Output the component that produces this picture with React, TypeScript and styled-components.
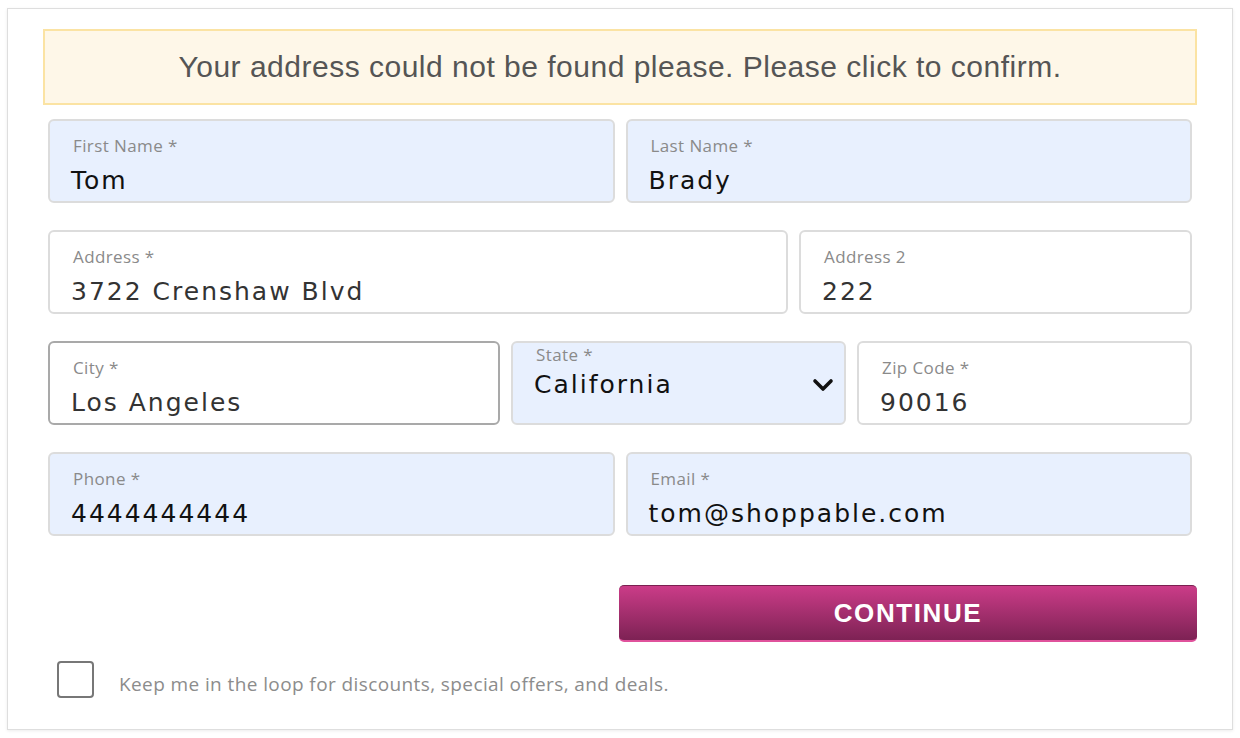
import styled, { createGlobalStyle } from "styled-components";

const GlobalStyle = createGlobalStyle`
    html, body { margin: 0; padding: 0; background: #ffffff; }
    * { box-sizing: border-box; }
`

const Card = styled.div`
    margin: 8px 7px;
    width: 1226px; height: 722px;
    padding: 20px 40px 0;
    border: 1px solid #dedede;
    box-shadow: 0 1px 3px rgba(0,0,0,0.08);
    background: #fff;
`
const Notice = styled.div`
    margin: 0 -5px 14px;
    height: 76px;
    display: flex; align-items: center; justify-content: center;
    background: #fef7e8;
    border: 2px solid #fbe3a3;
    font-family: "Liberation Sans", Arial, sans-serif;
    font-size: 30px; letter-spacing: 0.5px; color: #555;
`
const Rows = styled.div`
    display: flex; flex-direction: column; row-gap: 27px;
`
const Row = styled.div<{ $cols: string }>`
    display: grid; grid-template-columns: ${p => p.$cols}; column-gap: 11px;
`
const Field = styled.div<{ $filled?: boolean; $focus?: boolean }>`
    height: 84px;
    padding: 13px 23px 0;
    border-radius: 6px;
    border: 2px solid ${p => p.$focus ? "#a9a9a9" : "#dcdcdc"};
    background: ${p => p.$filled ? "#e8f0fe" : "#ffffff"};
    display: flex; flex-direction: column; row-gap: 9px;
`
const Label = styled.div`
    font-family: "Open Sans", Lato, sans-serif;
    font-size: 17px; letter-spacing: 0.4px; color: #8a8a8a;
`
const Value = styled.div<{ $dark?: boolean }>`
    margin-left: -2px;
    font-family: "DejaVu Sans", sans-serif;
    font-size: 25px; letter-spacing: 2px;
    color: ${p => p.$dark ? "#111" : "#333"};
`
const SelectField = styled(Field)`
    padding-top: 0; row-gap: 4px;
    padding-right: 10px;
`
const SelectLine = styled.div`
    display: flex; align-items: center; justify-content: space-between;
`
const ButtonRow = styled.div`
    display: flex; justify-content: flex-end;
    margin: 49px -5px 19px 0;
`
const Continue = styled.button`
    width: 578px; height: 57px;
    border: none; border-top: 1px solid #7a2050;
    border-bottom: 2px solid #e0529c;
    border-radius: 5px;
    background: linear-gradient(#cb3c88, #7d2254);
    color: #fff;
    font-family: "Liberation Sans", Arial, sans-serif;
    font-size: 26px; font-weight: 700; letter-spacing: 1.6px;
`
const OptIn = styled.label`
    display: flex; align-items: center; column-gap: 25px;
    padding-left: 9px;
    font-family: "Open Sans", Lato, sans-serif;
    font-size: 19px; letter-spacing: 0.4px; color: #8c8c8c;
`
const OptText = styled.span`
    margin-top: 8px;
`
const CheckBox = styled.span`
    width: 37px; height: 37px;
    border: 2px solid #777; border-radius: 4px;
`

function Chevron() {
    return (
        <svg width="22" height="14" viewBox="0 0 22 14">
            <polyline points="3,3 11,11 19,3" fill="none" stroke="#111" strokeWidth="3.6" strokeLinecap="round" strokeLinejoin="round" />
        </svg>
    )
}

export default function App() {
    return (
        <>
            <GlobalStyle />
            <Card>
                <Notice>Your address could not be found please. Please click to confirm.</Notice>
                <Rows>
                    <Row $cols="1fr 1fr">
                        <Field $filled><Label>First Name *</Label><Value $dark>Tom</Value></Field>
                        <Field $filled><Label>Last Name *</Label><Value $dark>Brady</Value></Field>
                    </Row>
                    <Row $cols="740px 1fr">
                        <Field><Label>Address *</Label><Value>3722 Crenshaw Blvd</Value></Field>
                        <Field><Label>Address 2</Label><Value>222</Value></Field>
                    </Row>
                    <Row $cols="452px 1fr 1fr">
                        <Field $focus><Label>City *</Label><Value>Los Angeles</Value></Field>
                        <SelectField $filled>
                            <Label>State *</Label>
                            <SelectLine><Value $dark>California</Value><Chevron /></SelectLine>
                        </SelectField>
                        <Field><Label>Zip Code *</Label><Value>90016</Value></Field>
                    </Row>
                    <Row $cols="1fr 1fr">
                        <Field $filled><Label>Phone *</Label><Value $dark>4444444444</Value></Field>
                        <Field $filled><Label>Email *</Label><Value $dark>tom@shoppable.com</Value></Field>
                    </Row>
                </Rows>
                <ButtonRow><Continue>CONTINUE</Continue></ButtonRow>
                <OptIn><CheckBox /><OptText>Keep me in the loop for discounts, special offers, and deals.</OptText></OptIn>
            </Card>
        </>
    )
}
